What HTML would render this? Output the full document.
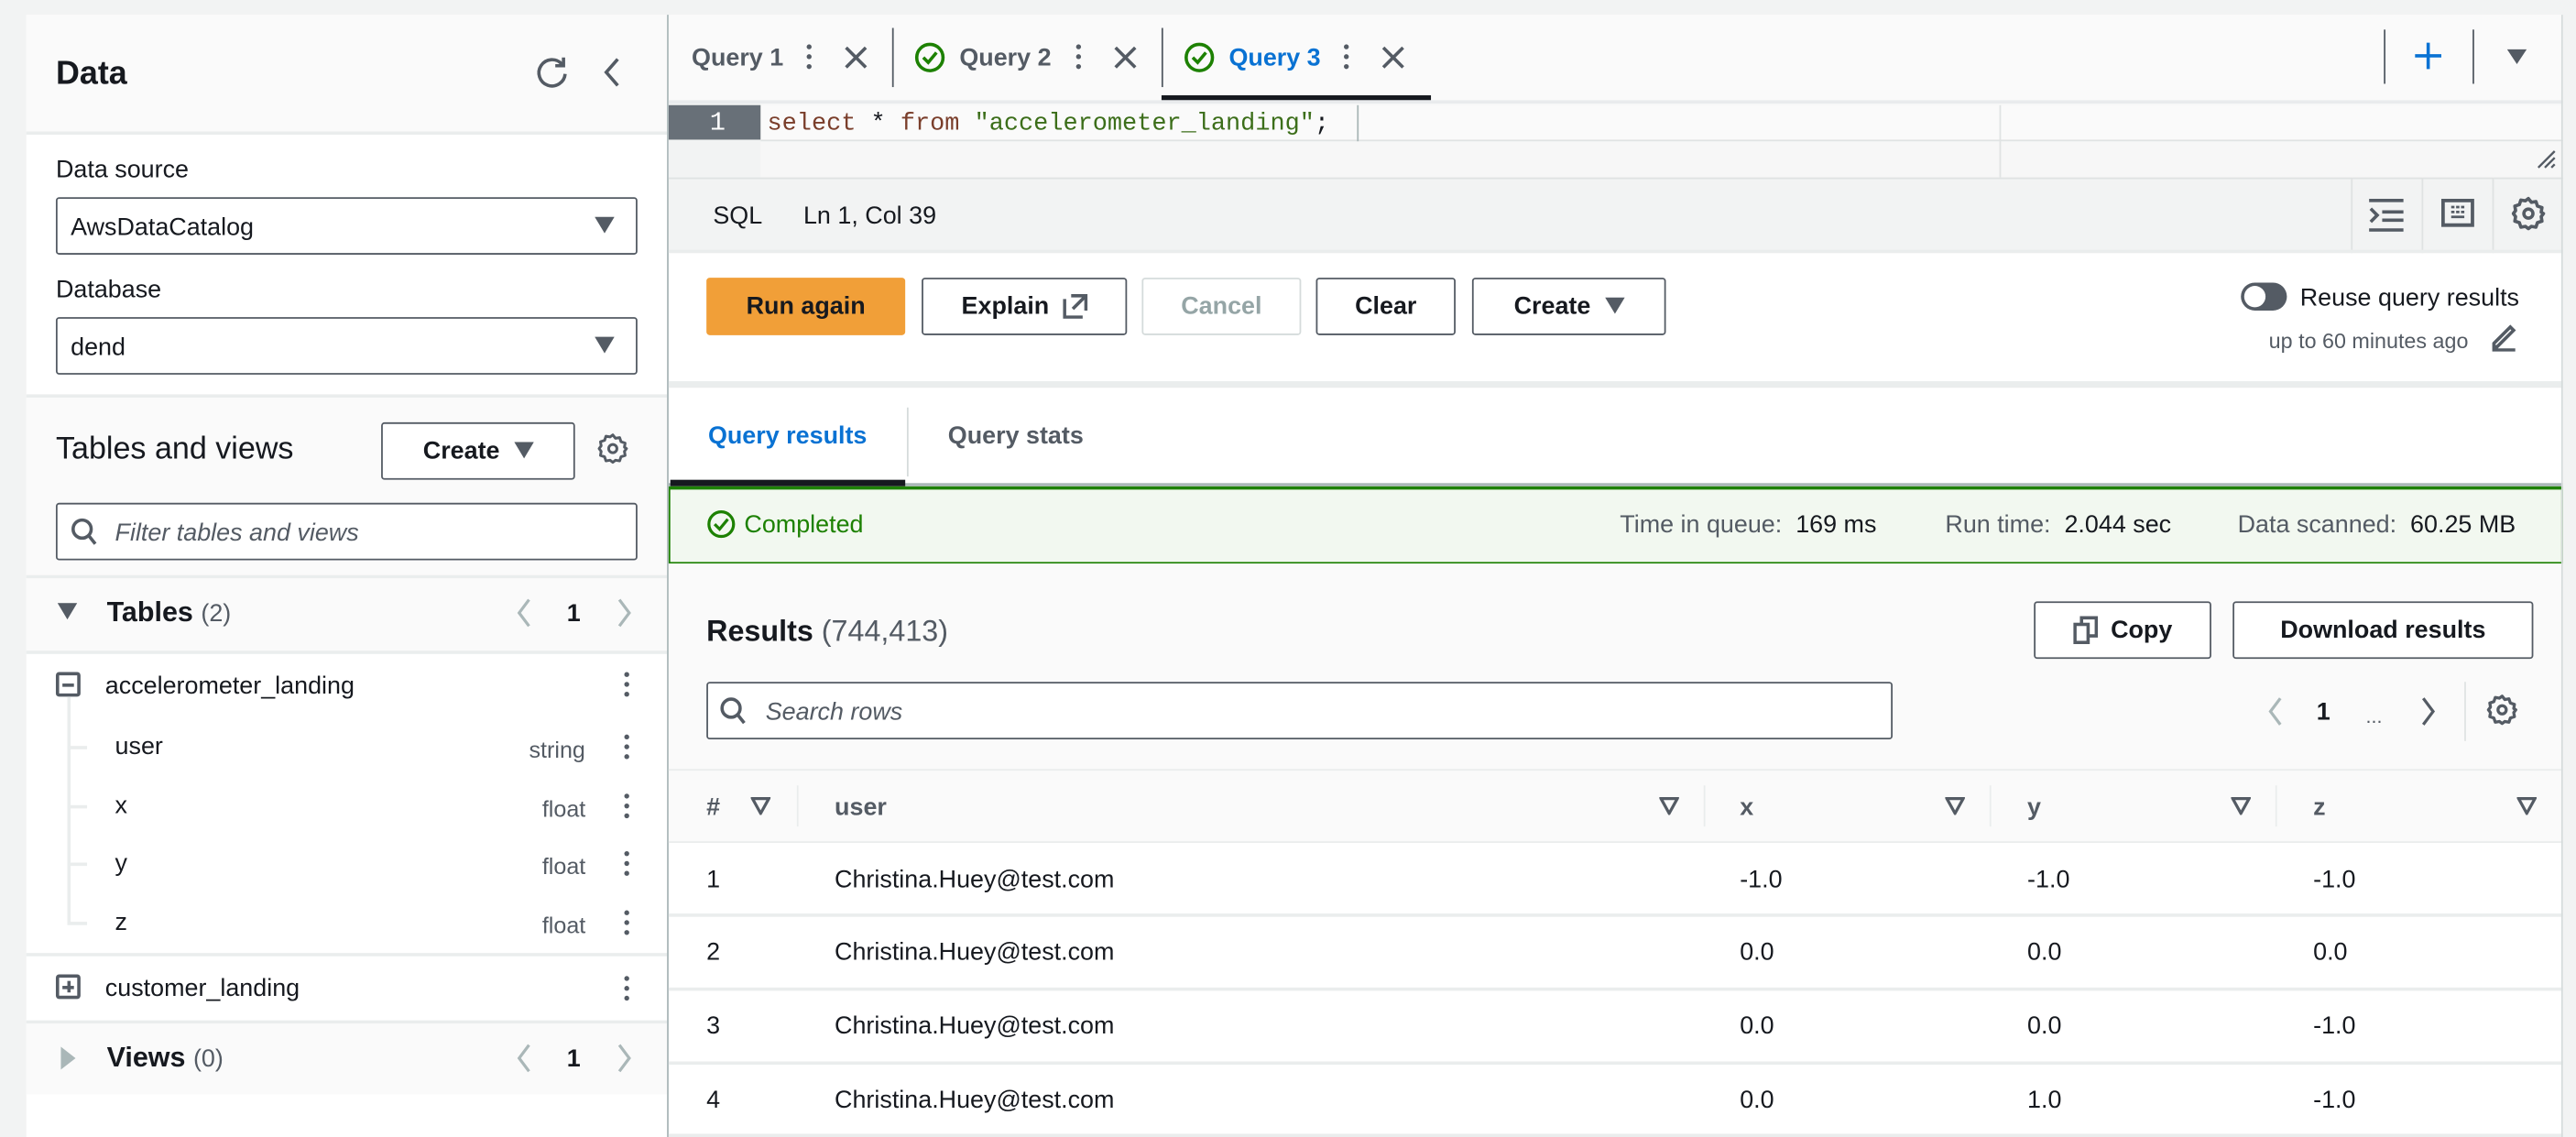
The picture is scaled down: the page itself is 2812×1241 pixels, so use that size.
<!DOCTYPE html>
<html><head><meta charset="utf-8"><style>
*{box-sizing:border-box;margin:0;padding:0}
html,body{width:2812px;height:1240px;overflow:hidden;background:#f2f3f3}
#w{position:absolute;left:0;top:0;width:1568px;height:692px;transform:scale(1.7934);transform-origin:0 0;font-family:"Liberation Sans",sans-serif;color:#16191f;font-size:15px}
.a{position:absolute}
.t{position:absolute;white-space:nowrap;line-height:18px;margin-top:1px}
.b{font-weight:bold}
.btn{position:absolute;border:1.5px solid #545b64;border-radius:2px;background:#fff;font-weight:bold;color:#16191f;display:flex;align-items:center;justify-content:center;font-size:15px}
.hl{position:absolute;height:1px;background:#eaeded}
.g{color:#545b64}
.dots{position:absolute;width:4px}
.dots i{display:block;width:3px;height:3px;border-radius:50%;background:#545b64;margin:0 0 3px 0}
svg{position:absolute}
</style></head><body><div id="w">
<div class="a" style="left:16px;top:9px;width:390px;height:683px;background:#fff"></div>
<div class="a" style="left:16px;top:9px;width:390px;height:71px;background:#fafafa"></div>
<div class="t b" style="left:34px;top:34px;font-size:20px;line-height:20px">Data</div>
<svg style="left:325px;top:33px" width="22" height="22" viewBox="0 0 22 22"><path d="M17 6A8 8 0 1 0 19 12" fill="none" stroke="#545b64" stroke-width="2"/><path d="M18 2v5h-5" fill="none" stroke="#545b64" stroke-width="2"/></svg>
<svg style="left:366px;top:34px" width="14" height="20" viewBox="0 0 14 20"><path d="M10 2L3 10l7 8" fill="none" stroke="#545b64" stroke-width="2"/></svg>
<div class="hl" style="left:16px;top:80px;width:390px;height:2px"></div>
<div class="t" style="left:34px;top:94px">Data source</div>
<div class="a" style="left:34px;top:120px;width:354px;height:35px;border:1.5px solid #545b64;border-radius:2px;background:#fff"></div>
<div class="t" style="left:43px;top:129px">AwsDataCatalog</div>
<svg style="left:362px;top:131px" width="12" height="12"><path d="M0 1h12L6 11z" fill="#545b64"/></svg>
<div class="t" style="left:34px;top:167px">Database</div>
<div class="a" style="left:34px;top:193px;width:354px;height:35px;border:1.5px solid #545b64;border-radius:2px;background:#fff"></div>
<div class="t" style="left:43px;top:202px">dend</div>
<svg style="left:362px;top:204px" width="12" height="12"><path d="M0 1h12L6 11z" fill="#545b64"/></svg>
<div class="hl" style="left:16px;top:240px;width:390px;height:2px"></div>
<div class="a" style="left:16px;top:242px;width:390px;height:108px;background:#fafafa"></div>
<div class="t" style="left:34px;top:262px;font-size:19px;line-height:22px">Tables and views</div>
<div class="btn" style="left:232px;top:257px;width:118px;height:35px">Create&nbsp;&nbsp;<svg style="position:static" width="12" height="11"><path d="M0 0h12L6 10z" fill="#545b64"/></svg></div>
<svg style="left:363px;top:263px" width="20" height="20" viewBox="0 0 24 24"><path d="M12 2l2 2.5 3-.5 1 3 3 1-.5 3L22 12l-1.5 2 .5 3-3 1-1 3-3-.5L12 22l-2-1.5-3 .5-1-3-3-1 .5-3L2 12l1.5-2L3 7l3-1 1-3 3 .5z" fill="none" stroke="#545b64" stroke-width="2" stroke-linejoin="round"/><circle cx="12" cy="12" r="3" fill="none" stroke="#545b64" stroke-width="2"/></svg>
<div class="a" style="left:34px;top:306px;width:354px;height:35px;border:1.5px solid #545b64;border-radius:2px;background:#fff"></div>
<svg style="left:43px;top:315px" width="16" height="18" viewBox="0 0 16 18"><circle cx="7" cy="7" r="5.5" fill="none" stroke="#545b64" stroke-width="2"/><path d="M11 11l4 5" stroke="#545b64" stroke-width="2"/></svg>
<div class="t g" style="left:70px;top:315px;font-style:italic">Filter tables and views</div>
<div class="hl" style="left:16px;top:350px;width:390px;height:2px"></div>
<div class="a" style="left:16px;top:352px;width:390px;height:44px;background:#fafafa"></div>
<svg style="left:35px;top:367px" width="12" height="11"><path d="M0 0h12L6 10z" fill="#545b64"/></svg>
<div class="t" style="left:65px;top:363px;font-size:17px"><b>Tables</b> <span class="g" style="font-size:15px">(2)</span></div>
<svg style="left:313px;top:363px" width="12" height="20"><path d="M9 2L3 10l6 8" fill="none" stroke="#aab7b8" stroke-width="1.8"/></svg>
<div class="t b" style="left:345px;top:364px">1</div>
<svg style="left:374px;top:363px" width="12" height="20"><path d="M3 2l6 8-6 8" fill="none" stroke="#aab7b8" stroke-width="1.8"/></svg>
<div class="hl" style="left:16px;top:396px;width:390px;height:2px"></div>
<div class="a" style="left:34px;top:409px;width:15px;height:15px;border:2px solid #545b64;border-radius:2px"></div>
<div class="a" style="left:38px;top:416px;width:7px;height:2px;background:#545b64"></div>
<div class="a" style="left:41px;top:424px;width:2px;height:138px;background:#eaeded"></div>
<div class="a" style="left:41px;top:454px;width:12px;height:2px;background:#eaeded"></div>
<div class="a" style="left:41px;top:490px;width:12px;height:2px;background:#eaeded"></div>
<div class="a" style="left:41px;top:525px;width:12px;height:2px;background:#eaeded"></div>
<div class="a" style="left:41px;top:561px;width:12px;height:2px;background:#eaeded"></div>
<div class="t" style="left:64px;top:408px">accelerometer_landing</div>
<div class="dots" style="left:380px;top:409px"><i></i><i></i><i></i></div>
<div class="t" style="left:70px;top:445px">user</div><div class="t g" style="left:322px;top:446px;font-size:14px">string</div><div class="dots" style="left:380px;top:447px"><i></i><i></i><i></i></div>
<div class="t" style="left:70px;top:481px">x</div><div class="t g" style="left:330px;top:482px;font-size:14px">float</div><div class="dots" style="left:380px;top:483px"><i></i><i></i><i></i></div>
<div class="t" style="left:70px;top:516px">y</div><div class="t g" style="left:330px;top:517px;font-size:14px">float</div><div class="dots" style="left:380px;top:518px"><i></i><i></i><i></i></div>
<div class="t" style="left:70px;top:552px">z</div><div class="t g" style="left:330px;top:553px;font-size:14px">float</div><div class="dots" style="left:380px;top:554px"><i></i><i></i><i></i></div>
<div class="hl" style="left:16px;top:580px;width:390px;height:2px"></div>
<div class="a" style="left:34px;top:593px;width:15px;height:15px;border:2px solid #545b64;border-radius:2px"></div>
<div class="a" style="left:38px;top:600px;width:7px;height:1.5px;background:#545b64"></div>
<div class="a" style="left:41px;top:597px;width:1.5px;height:7px;background:#545b64"></div>
<div class="t" style="left:64px;top:592px">customer_landing</div>
<div class="dots" style="left:380px;top:594px"><i></i><i></i><i></i></div>
<div class="hl" style="left:16px;top:621px;width:390px;height:2px"></div>
<div class="a" style="left:16px;top:623px;width:390px;height:43px;background:#fafafa"></div>
<svg style="left:37px;top:637px" width="10" height="14"><path d="M0 0v14l9-7z" fill="#aab7b8"/></svg>
<div class="t" style="left:65px;top:634px;font-size:17px"><b>Views</b> <span class="g" style="font-size:15px">(0)</span></div>
<svg style="left:313px;top:634px" width="12" height="20"><path d="M9 2L3 10l6 8" fill="none" stroke="#aab7b8" stroke-width="1.8"/></svg>
<div class="t b" style="left:345px;top:635px">1</div>
<svg style="left:374px;top:634px" width="12" height="20"><path d="M3 2l6 8-6 8" fill="none" stroke="#aab7b8" stroke-width="1.8"/></svg>
<div class="a" style="left:406px;top:9px;width:1.5px;height:683px;background:#aab7b8"></div>

<div class="a" style="left:407px;top:9px;width:1153px;height:683px;background:#fff"></div>
<div class="a" style="left:407px;top:9px;width:1153px;height:52px;background:#fafafa"></div>
<div class="t b" style="left:421px;top:26px;color:#545b64">Query 1</div>
<div class="dots" style="left:491px;top:27px"><i></i><i></i><i></i></div>
<svg style="left:513px;top:27px" width="16" height="16"><path d="M2 2l12 12M14 2L2 14" stroke="#545b64" stroke-width="2"/></svg>
<div class="a" style="left:543px;top:17px;width:1px;height:36px;background:#545b64"></div>
<svg style="left:556px;top:25px" width="20" height="20"><circle cx="10" cy="10" r="8" fill="none" stroke="#1d8102" stroke-width="2"/><path d="M6 10l3 3 5-6" fill="none" stroke="#1d8102" stroke-width="2"/></svg>
<div class="t b" style="left:584px;top:26px;color:#545b64">Query 2</div>
<div class="dots" style="left:655px;top:27px"><i></i><i></i><i></i></div>
<svg style="left:677px;top:27px" width="16" height="16"><path d="M2 2l12 12M14 2L2 14" stroke="#545b64" stroke-width="2"/></svg>
<div class="a" style="left:707px;top:17px;width:1px;height:36px;background:#545b64"></div>
<svg style="left:720px;top:25px" width="20" height="20"><circle cx="10" cy="10" r="8" fill="none" stroke="#1d8102" stroke-width="2"/><path d="M6 10l3 3 5-6" fill="none" stroke="#1d8102" stroke-width="2"/></svg>
<div class="t b" style="left:748px;top:26px;color:#0972d3">Query 3</div>
<div class="dots" style="left:818px;top:27px"><i></i><i></i><i></i></div>
<svg style="left:840px;top:27px" width="16" height="16"><path d="M2 2l12 12M14 2L2 14" stroke="#545b64" stroke-width="2"/></svg>
<div class="a" style="left:707px;top:58px;width:164px;height:3px;background:#16191f"></div>
<div class="a" style="left:1451px;top:18px;width:1px;height:33px;background:#545b64"></div>
<svg style="left:1469px;top:25px" width="18" height="18"><path d="M9 1v16M1 9h16" stroke="#0972d3" stroke-width="2"/></svg>
<div class="a" style="left:1505px;top:18px;width:1px;height:33px;background:#545b64"></div>
<svg style="left:1526px;top:30px" width="12" height="10"><path d="M0 0h12L6 9z" fill="#545b64"/></svg>
<div class="a" style="left:407px;top:61px;width:1153px;height:47px;background:#f7f7f7;border-top:2px solid #e9ebed"></div>
<div class="a" style="left:407px;top:63px;width:56px;height:45px;background:#f2f3f3"></div>
<div class="a" style="left:407px;top:64px;width:56px;height:21px;background:#687078"></div>
<div class="t" style="left:432px;top:65px;color:#fff;font-family:'Liberation Mono',monospace;font-size:16px">1</div>
<div class="a" style="left:463px;top:64px;width:1097px;height:22px;background:#fafafa;border-bottom:1px solid #e0e3e3"></div>
<div class="t" style="left:467px;top:66px;font-family:'Liberation Mono',monospace;font-size:15px"><span style="color:#7a3e2b">select</span> * <span style="color:#7a3e2b">from</span> <span style="color:#3c6e1a">"accelerometer_landing"</span>;</div>
<div class="a" style="left:826px;top:64px;width:1px;height:22px;background:#aab7b8"></div>
<div class="a" style="left:1217px;top:64px;width:1px;height:44px;background:#e0e3e3"></div>
<svg style="left:1543px;top:90px" width="14" height="14"><path d="M2 12L12 2M6 12l6-6M10 12l2-2" stroke="#545b64" stroke-width="1.3"/></svg>
<div class="a" style="left:407px;top:108px;width:1153px;height:46px;background:#f2f3f3;border-top:1.5px solid #dfe2e2"></div>
<div class="t" style="left:434px;top:122px">SQL</div>
<div class="t" style="left:489px;top:122px">Ln 1, Col 39</div>
<div class="a" style="left:1431px;top:109px;width:1px;height:45px;background:#dfe2e2"></div>
<div class="a" style="left:1474px;top:109px;width:1px;height:45px;background:#dfe2e2"></div>
<div class="a" style="left:1517px;top:109px;width:1px;height:45px;background:#dfe2e2"></div>
<svg style="left:1442px;top:121px" width="21" height="20"><path d="M0 1h21M8 8h13M8 13h13M0 19h21" stroke="#545b64" stroke-width="2"/><path d="M1 6l4 4-4 4" fill="none" stroke="#545b64" stroke-width="2"/></svg>
<svg style="left:1486px;top:121px" width="20" height="18"><rect x="1" y="1" width="18" height="15" fill="none" stroke="#545b64" stroke-width="2.2"/><path d="M6 5h2M9 5h2M12 5h2M6 8h2M9 8h2M12 8h2M6 11h8" stroke="#545b64" stroke-width="1.5"/></svg>
<svg style="left:1528px;top:119px" width="22" height="22" viewBox="0 0 24 24"><path d="M12 2l2 2.5 3-.5 1 3 3 1-.5 3L22 12l-1.5 2 .5 3-3 1-1 3-3-.5L12 22l-2-1.5-3 .5-1-3-3-1 .5-3L2 12l1.5-2L3 7l3-1 1-3 3 .5z" fill="none" stroke="#545b64" stroke-width="2.2" stroke-linejoin="round"/><circle cx="12" cy="12" r="3" fill="none" stroke="#545b64" stroke-width="2.2"/></svg>
<div class="a" style="left:407px;top:152px;width:1153px;height:2px;background:#eaeded"></div>
<div class="btn" style="left:430px;top:169px;width:121px;height:35px;background:#f19f38;border-color:#f19f38">Run again</div>
<div class="btn" style="left:561px;top:169px;width:125px;height:35px">Explain&nbsp;<svg style="position:static;margin-left:4px" width="15" height="15"><path d="M1 3v11h11M5 1h9v9M14 1L6 9" fill="none" stroke="#545b64" stroke-width="2"/></svg></div>
<div class="btn" style="left:695px;top:169px;width:97px;height:35px;border-color:#d5dbdb;color:#95a5a6">Cancel</div>
<div class="btn" style="left:801px;top:169px;width:85px;height:35px">Clear</div>
<div class="btn" style="left:896px;top:169px;width:118px;height:35px">Create&nbsp;&nbsp;<svg style="position:static" width="12" height="11"><path d="M0 0h12L6 10z" fill="#545b64"/></svg></div>
<div class="a" style="left:1364px;top:172px;width:28px;height:17px;border-radius:9px;background:#545b64"></div>
<div class="a" style="left:1366px;top:174px;width:13px;height:13px;border-radius:50%;background:#fff"></div>
<div class="t" style="left:1400px;top:172px">Reuse query results</div>
<div class="t g" style="left:1381px;top:198px;font-size:13px">up to 60 minutes ago</div>
<svg style="left:1515px;top:196px" width="18" height="18"><path d="M3 13L13 3l2 2L5 15H3zM2 17h14" fill="none" stroke="#545b64" stroke-width="2"/></svg>
<div class="a" style="left:407px;top:232px;width:1153px;height:4px;background:#eaeded"></div>
<div class="t b" style="left:431px;top:256px;color:#0972d3">Query results</div>
<div class="a" style="left:552px;top:248px;width:1px;height:42px;background:#d5dbdb"></div>
<div class="t b" style="left:577px;top:256px;color:#545b64">Query stats</div>
<div class="a" style="left:407px;top:294px;width:1153px;height:2px;background:#aab7b8"></div>
<div class="a" style="left:408px;top:292px;width:143px;height:4px;background:#16191f"></div>
<div class="a" style="left:407px;top:296px;width:1153px;height:47px;background:#f2f8f0;border:1.5px solid #1d8102;border-top-width:2px"></div>
<svg style="left:430px;top:310px" width="18" height="18"><circle cx="9" cy="9" r="7.5" fill="none" stroke="#1d8102" stroke-width="1.8"/><path d="M5 9l3 3 5-6" fill="none" stroke="#1d8102" stroke-width="1.8"/></svg>
<div class="t" style="left:453px;top:310px;color:#1d8102">Completed</div>
<div class="t" style="left:986px;top:310px"><span class="g">Time in queue:</span>&nbsp; 169 ms</div>
<div class="t" style="left:1184px;top:310px"><span class="g">Run time:</span>&nbsp; 2.044 sec</div>
<div class="t" style="left:1362px;top:310px"><span class="g">Data scanned:</span>&nbsp; 60.25 MB</div>
<div class="a" style="left:407px;top:343px;width:1153px;height:126px;background:#fafafa"></div>
<div class="t" style="left:430px;top:372px;font-size:18px;line-height:22px"><b>Results</b> <span class="g">(744,413)</span></div>
<div class="btn" style="left:1238px;top:366px;width:108px;height:35px"><svg style="position:static;margin-right:8px" width="15" height="17"><rect x="1" y="5" width="8" height="11" fill="none" stroke="#545b64" stroke-width="2"/><path d="M5 5V1h9v11H9" fill="none" stroke="#545b64" stroke-width="2"/></svg>Copy</div>
<div class="btn" style="left:1359px;top:366px;width:183px;height:35px">Download results</div>
<div class="a" style="left:430px;top:415px;width:722px;height:35px;border:1.5px solid #545b64;border-radius:2px;background:#fff"></div>
<svg style="left:438px;top:424px" width="16" height="18" viewBox="0 0 16 18"><circle cx="7" cy="7" r="5.5" fill="none" stroke="#545b64" stroke-width="2"/><path d="M11 11l4 5" stroke="#545b64" stroke-width="2"/></svg>
<div class="t g" style="left:466px;top:424px;font-style:italic">Search rows</div>
<svg style="left:1379px;top:423px" width="12" height="20"><path d="M9 2L3 10l6 8" fill="none" stroke="#aab7b8" stroke-width="1.8"/></svg>
<div class="t b" style="left:1410px;top:424px">1</div>
<div class="t g" style="left:1440px;top:426px;font-size:12px">...</div>
<svg style="left:1472px;top:423px" width="12" height="20"><path d="M3 2l6 8-6 8" fill="none" stroke="#545b64" stroke-width="1.8"/></svg>
<div class="a" style="left:1500px;top:415px;width:1px;height:36px;background:#e0e3e3"></div>
<svg style="left:1513px;top:422px" width="20" height="20" viewBox="0 0 24 24"><path d="M12 2l2 2.5 3-.5 1 3 3 1-.5 3L22 12l-1.5 2 .5 3-3 1-1 3-3-.5L12 22l-2-1.5-3 .5-1-3-3-1 .5-3L2 12l1.5-2L3 7l3-1 1-3 3 .5z" fill="none" stroke="#545b64" stroke-width="2.2" stroke-linejoin="round"/><circle cx="12" cy="12" r="3" fill="none" stroke="#545b64" stroke-width="2.2"/></svg>
<div class="a" style="left:407px;top:468px;width:1153px;height:45px;background:#fafafa;border-top:1.5px solid #eaeded;border-bottom:1.5px solid #eaeded"></div>
<div class="t b" style="left:430px;top:482px;color:#545b64">#</div>
<div class="t b" style="left:508px;top:482px;color:#545b64">user</div>
<div class="t b" style="left:1059px;top:482px;color:#545b64">x</div>
<div class="t b" style="left:1234px;top:482px;color:#545b64">y</div>
<div class="t b" style="left:1408px;top:482px;color:#545b64">z</div>
<svg style="left:457px;top:485px" width="12" height="11"><path d="M1 1h10L6 10z" fill="none" stroke="#545b64" stroke-width="1.8"/></svg>
<svg style="left:1010px;top:485px" width="12" height="11"><path d="M1 1h10L6 10z" fill="none" stroke="#545b64" stroke-width="1.8"/></svg>
<svg style="left:1184px;top:485px" width="12" height="11"><path d="M1 1h10L6 10z" fill="none" stroke="#545b64" stroke-width="1.8"/></svg>
<svg style="left:1358px;top:485px" width="12" height="11"><path d="M1 1h10L6 10z" fill="none" stroke="#545b64" stroke-width="1.8"/></svg>
<svg style="left:1532px;top:485px" width="12" height="11"><path d="M1 1h10L6 10z" fill="none" stroke="#545b64" stroke-width="1.8"/></svg>
<div class="a" style="left:485px;top:478px;width:1px;height:25px;background:#eaeded"></div>
<div class="a" style="left:1037px;top:478px;width:1px;height:25px;background:#eaeded"></div>
<div class="a" style="left:1211px;top:478px;width:1px;height:25px;background:#eaeded"></div>
<div class="a" style="left:1385px;top:478px;width:1px;height:25px;background:#eaeded"></div>
<div class="t" style="left:430px;top:526px">1</div><div class="t" style="left:508px;top:526px">Christina.Huey@test.com</div><div class="t" style="left:1059px;top:526px">-1.0</div><div class="t" style="left:1234px;top:526px">-1.0</div><div class="t" style="left:1408px;top:526px">-1.0</div>
<div class="hl" style="left:407px;top:556px;width:1153px;height:1.5px"></div>
<div class="t" style="left:430px;top:570px">2</div><div class="t" style="left:508px;top:570px">Christina.Huey@test.com</div><div class="t" style="left:1059px;top:570px">0.0</div><div class="t" style="left:1234px;top:570px">0.0</div><div class="t" style="left:1408px;top:570px">0.0</div>
<div class="hl" style="left:407px;top:601px;width:1153px;height:1.5px"></div>
<div class="t" style="left:430px;top:615px">3</div><div class="t" style="left:508px;top:615px">Christina.Huey@test.com</div><div class="t" style="left:1059px;top:615px">0.0</div><div class="t" style="left:1234px;top:615px">0.0</div><div class="t" style="left:1408px;top:615px">-1.0</div>
<div class="hl" style="left:407px;top:646px;width:1153px;height:1.5px"></div>
<div class="t" style="left:430px;top:660px">4</div><div class="t" style="left:508px;top:660px">Christina.Huey@test.com</div><div class="t" style="left:1059px;top:660px">0.0</div><div class="t" style="left:1234px;top:660px">1.0</div><div class="t" style="left:1408px;top:660px">-1.0</div>
<div class="hl" style="left:407px;top:690px;width:1153px;height:1.5px"></div>
<div class="a" style="left:1559px;top:9px;width:1px;height:683px;background:#d5dbdb"></div>
</div></body></html>
